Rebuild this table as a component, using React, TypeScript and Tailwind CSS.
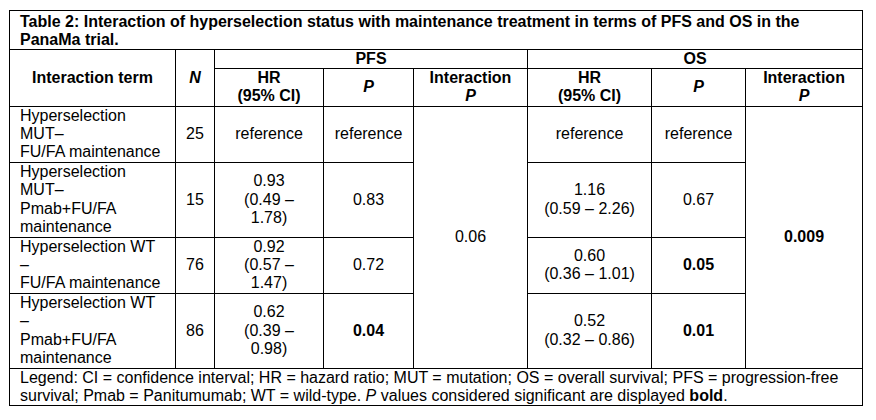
import React from "react";

// Tabela 2 - interação do status de hiperseleção com o tratamento de manutenção
type Row = {
  term: React.ReactNode;
  n: string;
  pfsHr: React.ReactNode;
  pfsP: string;
  pfsPBold?: boolean;
  osHr: React.ReactNode;
  osP: string;
  osPBold?: boolean;
  h: string;
};

const cell = "border border-black align-middle text-center px-[6px] py-0";

const rows: Row[] = [
  {
    term: (<>Hyperselection<br />MUT–<br />FU/FA maintenance</>),
    n: "25",
    pfsHr: "reference",
    pfsP: "reference",
    osHr: "reference",
    osP: "reference",
    h: "h-[56px]",
  },
  {
    term: (<>Hyperselection<br />MUT–<br />Pmab+FU/FA<br />maintenance</>),
    n: "15",
    pfsHr: (<>0.93<br />(0.49 –<br />1.78)</>),
    pfsP: "0.83",
    osHr: (<>1.16<br />(0.59 – 2.26)</>),
    osP: "0.67",
    h: "h-[75px]",
  },
  {
    term: (<>Hyperselection WT<br />–<br />FU/FA maintenance</>),
    n: "76",
    pfsHr: (<>0.92<br />(0.57 –<br />1.47)</>),
    pfsP: "0.72",
    osHr: (<>0.60<br />(0.36 – 1.01)</>),
    osP: "0.05",
    osPBold: true,
    h: "h-[56px]",
  },
  {
    term: (<>Hyperselection WT<br />–<br />Pmab+FU/FA<br />maintenance</>),
    n: "86",
    pfsHr: (<>0.62<br />(0.39 –<br />0.98)</>),
    pfsP: "0.04",
    pfsPBold: true,
    osHr: (<>0.52<br />(0.32 – 0.86)</>),
    osP: "0.01",
    osPBold: true,
    h: "h-[75px]",
  },
];

export default function App() {
  return (
    <div className="w-[876px] h-[420px] bg-white pt-[10px] pl-[9px] text-black" style={{ fontFamily: '"Liberation Sans", Arial, sans-serif' }}>
      <table className="table-fixed border-collapse w-[853px] text-[16px] leading-[18.2px]">
        <colgroup>
          <col className="w-[166px]" />
          <col className="w-[39px]" />
          <col className="w-[109px]" />
          <col className="w-[90px]" />
          <col className="w-[114px]" />
          <col className="w-[124px]" />
          <col className="w-[94px]" />
          <col className="w-[117px]" />
        </colgroup>
        <tbody>
          <tr className="h-[39px]">
            <td colSpan={8} className="border border-black text-left align-top font-bold pl-[10px] pt-[2px] leading-[18px]">
              Table 2: Interaction of hyperselection status with maintenance treatment in terms of PFS and OS in the
              PanaMa trial.
            </td>
          </tr>
          <tr className="h-[19px] font-bold">
            <td rowSpan={2} className={cell}>Interaction term</td>
            <td rowSpan={2} className={cell + " italic"}>N</td>
            <td colSpan={3} className={cell}>PFS</td>
            <td colSpan={3} className={cell}>OS</td>
          </tr>
          <tr className="h-[37px] font-bold">
            <td className={cell}>HR<br />(95% CI)</td>
            <td className={cell + " italic"}>P</td>
            <td className={cell}>Interaction<br /><i>P</i></td>
            <td className={cell}>HR<br />(95% CI)</td>
            <td className={cell + " italic"}>P</td>
            <td className={cell}>Interaction<br /><i>P</i></td>
          </tr>
          {rows.map((r, i) => (
            <tr key={i} className={r.h}>
              <td className={cell + " text-left pl-[10px]"}>{r.term}</td>
              <td className={cell}>{r.n}</td>
              <td className={cell}>{r.pfsHr}</td>
              <td className={cell + (r.pfsPBold ? " font-bold" : "")}>{r.pfsP}</td>
              {i === 0 && <td rowSpan={4} className={cell}>0.06</td>}
              <td className={cell}>{r.osHr}</td>
              <td className={cell + (r.osPBold ? " font-bold" : "")}>{r.osP}</td>
              {i === 0 && <td rowSpan={4} className={cell + " font-bold"}>0.009</td>}
            </tr>
          ))}
          <tr className="h-[37px]">
            <td colSpan={8} className="border border-black text-left align-middle pl-[10px] pr-[6px] leading-[18px]">
              Legend: CI = confidence interval; HR = hazard ratio; MUT = mutation; OS = overall survival; PFS = progression-free
              survival; Pmab = Panitumumab; WT = wild-type. <i>P</i> values considered significant are displayed <b>bold</b>.
            </td>
          </tr>
        </tbody>
      </table>
    </div>
  );
}
